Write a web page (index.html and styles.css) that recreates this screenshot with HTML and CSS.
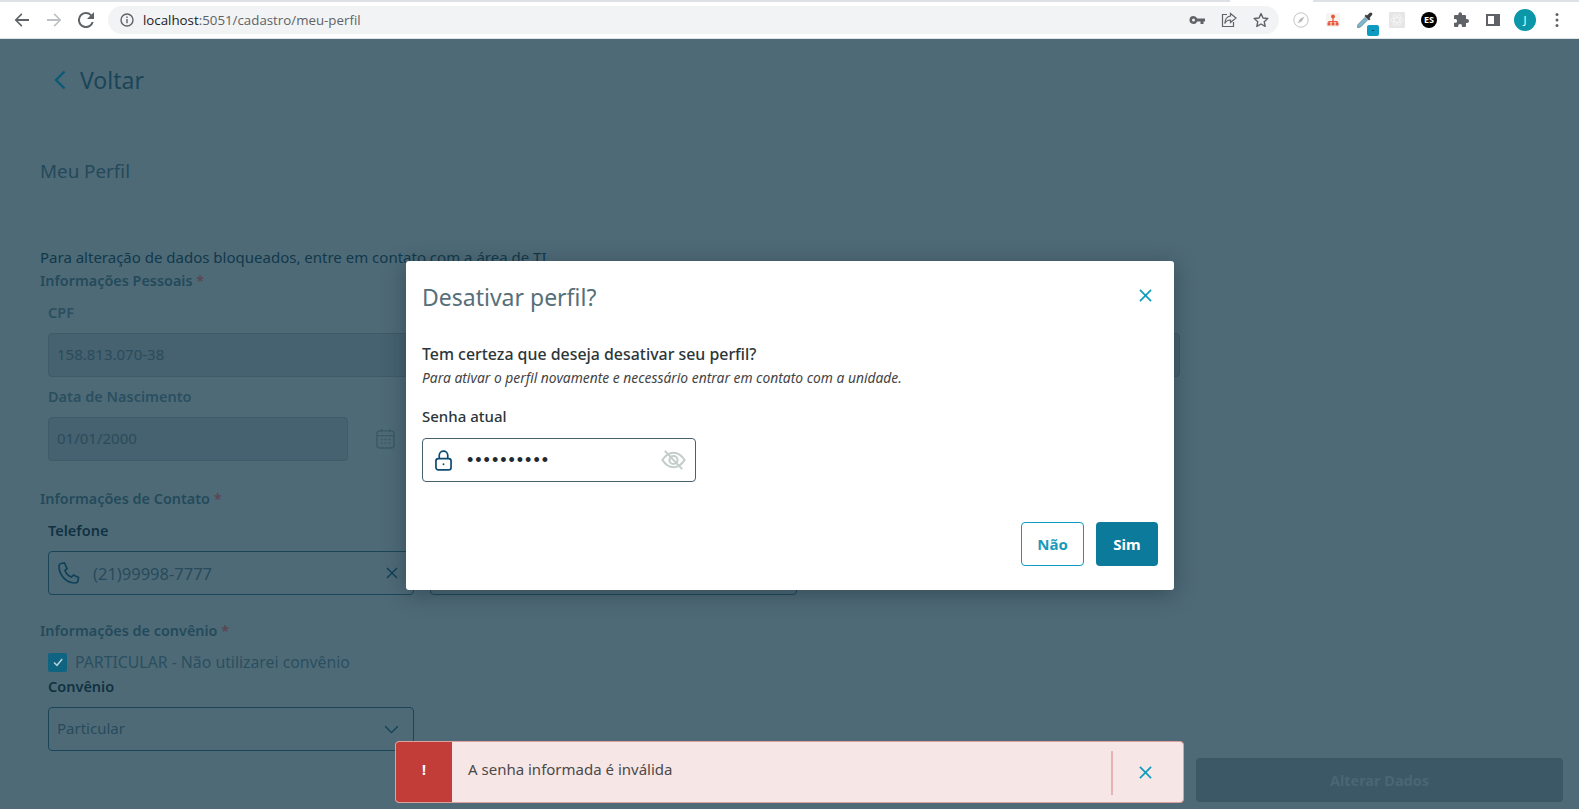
FILE: index.html
```html
<!DOCTYPE html>
<html lang="pt-BR">
<head>
<meta charset="UTF-8" />
<meta name="viewport" content="width=device-width, initial-scale=1" />
<title>Meu Perfil</title>
<link rel="stylesheet" href="styles.css">
</head>
<body>

<div class="abas"><span class="aba"></span></div>

<header class="barra">
  <button class="btn-nav">
    <svg viewBox="0 0 16 16" width="16" height="16"><path d="M15 7H3.800l4.600-4.600L7.300 1.300.6 8l6.700 6.700 1.100-1.100L3.800 9H15z" fill="#5f6368"/></svg>
  </button>
  <button class="btn-nav">
    <svg viewBox="0 0 16 16" width="16" height="16"><path d="M1 7h11.200L7.600 2.400l1.100-1.100L15.400 8l-6.700 6.700-1.100-1.100L12.200 9H1z" fill="#bdc1c6"/></svg>
  </button>
  <button class="btn-nav">
    <svg viewBox="0 0 16 16" width="16" height="16"><path d="M13.600 2.400A7.900 7.900 0 0 0 8 0a8 8 0 1 0 7.700 10h-2.100A6 6 0 1 1 8 2c1.700 0 3.100.7 4.200 1.800L9 7h7V0z" fill="#5f6368"/></svg>
  </button>

  <div class="omnibox">
    <svg class="omni-info" viewBox="0 0 14 14" width="14" height="14"><circle cx="7" cy="7" r="6" fill="none" stroke="#5f6368" stroke-width="1.400"/><path d="M6.300 6h1.400v4.200H6.300zM6.300 3.500h1.400v1.400H6.300z" fill="#5f6368"/></svg>
    <span class="url"><b>localhost</b>:5051/cadastro/meu-perfil</span>
    <div class="omni-acoes">
      <svg viewBox="0 0 16 16" width="16" height="16"><path d="M4.500 4a4 4 0 0 1 3.700 2.500H16v3h-1.500V12h-3V9.500H8.200A4 4 0 1 1 4.500 4zm0 2.500a1.500 1.500 0 1 0 0 3 1.500 1.500 0 0 0 0-3z" fill="#5f6368"/></svg>
      <svg viewBox="0 0 16 16" width="16" height="16" fill="none" stroke="#5f6368" stroke-width="1.200"><path d="M6 2.500H1.500v12h11V10"/><path d="M9.500 1.500 15 6l-5.500 4.500V8C7 8 5 9 3.800 11.500 4 7.500 6 4.500 9.500 4z"/></svg>
      <svg viewBox="0 0 16 16" width="16" height="16"><path d="M8 1.600 10 6l4.800.5-3.600 3.200 1 4.700L8 12l-4.200 2.400 1-4.700L1.200 6.500 6 6z" fill="none" stroke="#5f6368" stroke-width="1.400" stroke-linejoin="round"/></svg>
    </div>
  </div>

  <div class="extensoes">
    <button class="btn-ext">
      <svg viewBox="0 0 16 16" width="16" height="16"><circle cx="8" cy="8" r="7.200" fill="#fff" stroke="#c4c4c4" stroke-width="1"/><path d="M11.500 4.500 9 9 4.500 11.500 7 7z" fill="#b5b5b5"/></svg>
    </button>
    <button class="btn-ext">
      <svg viewBox="0 0 16 16" width="16" height="16"><rect x="1" y="1" width="14" height="14" rx="2" fill="#f7f3f1"/><circle cx="8" cy="4.500" r="2" fill="#e8573a"/><path d="M8 6v3M4 12V9.500h8V12M8 9.500V12" stroke="#e8573a" fill="none" stroke-width="1.200"/><rect x="2.500" y="10.500" width="3" height="3" fill="#e8573a"/><rect x="6.500" y="10.500" width="3" height="3" fill="#e8573a"/><rect x="10.500" y="10.500" width="3" height="3" fill="#e8573a"/></svg>
    </button>
    <button class="btn-ext">
      <svg viewBox="0 0 18 18" width="18" height="18"><path d="M1.500 16.500 2 13.500 9 6.500 11.500 9 4.500 16z" fill="#7fb6d0" stroke="#55808f" stroke-width=".8"/><path d="M8.500 5 10 3.500l1 1L13.500 2c1-.7 2-.7 2.500 0s.5 1.500-.2 2.300L13.500 7l1 1L13 9.500z" fill="#3c4043"/></svg>
      <span class="ext-badge">-</span>
    </button>
    <button class="btn-ext">
      <svg viewBox="0 0 16 16" width="16" height="16"><rect width="16" height="16" fill="#e6e6e6"/><g fill="none" stroke="#f5f5f5" stroke-width=".8"><ellipse cx="8" cy="8" rx="6" ry="2.500"/><ellipse cx="8" cy="8" rx="6" ry="2.500" transform="rotate(60 8 8)"/><ellipse cx="8" cy="8" rx="6" ry="2.500" transform="rotate(120 8 8)"/></g></svg>
    </button>
    <button class="btn-ext"><span class="ext-es">ES</span></button>
    <button class="btn-ext">
      <svg viewBox="0 0 16 16" width="16" height="16"><path d="M14 7h-1V4a1 1 0 0 0-1-1H9V2a1.800 1.800 0 0 0-3.600 0v1H2a1 1 0 0 0-1 1v3h1.200a1.900 1.900 0 0 1 0 3.800H1V14a1 1 0 0 0 1 1h3.200v-1.100a1.900 1.900 0 0 1 3.800 0V15h3a1 1 0 0 0 1-1v-3h1a2 2 0 0 0 0-4z" fill="#5f6368"/></svg>
    </button>
    <button class="btn-ext">
      <svg viewBox="0 0 16 16" width="16" height="16"><path d="M1 2h14v12H1zm2 2v8h6V4z" fill="#5f6368" fill-rule="evenodd"/></svg>
    </button>
    <button class="btn-ext"><span class="avatar">J</span></button>
    <button class="btn-ext">
      <svg viewBox="0 0 4 16" width="4" height="16"><circle cx="2" cy="2.500" r="1.500" fill="#5f6368"/><circle cx="2" cy="8" r="1.500" fill="#5f6368"/><circle cx="2" cy="13.500" r="1.500" fill="#5f6368"/></svg>
    </button>
  </div>
</header>

<main class="pagina">
  <a class="voltar">
    <svg viewBox="0 0 12 20" width="12" height="20"><path d="M10.500 1.500 2 10l8.500 8.500" fill="none" stroke="#0b5a76" stroke-width="2.400"/></svg>
    <span>Voltar</span>
  </a>

  <h1 class="titulo">Meu Perfil</h1>

  <p class="aviso">Para alteração de dados bloqueados, entre em contato com a área de TI</p>
  <h2 class="secao">Informações Pessoais <em>*</em></h2>

  <div class="campos">
    <label class="rotulo">CPF</label>
    <div class="input bloqueado cheio">158.813.070-38</div>

    <label class="rotulo">Data de Nascimento</label>
    <div class="linha-data">
      <div class="input bloqueado data">01/01/2000</div>
      <svg viewBox="0 0 20 22" width="19" height="21" fill="none" stroke="#3a5a68" stroke-width="1.500"><rect x="1" y="3" width="18" height="18" rx="3"/><path d="M1 8h18M5.500 1v3M14.500 1v3"/><path d="M5 12h2M9 12h2M13 12h2M5 16h2M9 16h2M13 16h2" stroke-width="1.600"/></svg>
    </div>
  </div>

  <h2 class="secao contato">Informações de Contato <em>*</em></h2>
  <div class="campos">
    <label class="rotulo forte">Telefone</label>
    <div class="linha-dupla">
      <div class="input ativo">
        <svg viewBox="0 0 24 24" width="24" height="24" fill="none" stroke="#0f4257" stroke-width="1.700"><path d="M4 2.500 7.500 2 10 7.500 8 9.500c1 3 3.500 5.500 6.500 6.500l2-2 5 2.500-.5 3.500c-.3 1.200-1.200 2-2.500 2C9.500 22 2 14.500 2 5c0-1.200.8-2.200 2-2.500z"/></svg>
        <span class="valor">(21)99998-7777</span>
        <svg class="limpar" viewBox="0 0 12 12" width="12" height="12"><path d="M1 1l10 10M11 1 1 11" stroke="#0f4257" stroke-width="1.500"/></svg>
      </div>
      <div class="input ativo email"></div>
    </div>
  </div>

  <h2 class="secao convenio">Informações de convênio <em>*</em></h2>
  <div class="campos">
    <div class="check-linha">
      <span class="check"><svg viewBox="0 0 12 12" width="12" height="12"><path d="M2 6.500 5 9.300 10.200 3" fill="none" stroke="#b9d0d9" stroke-width="1.500"/></svg></span>
      <span>PARTICULAR - Não utilizarei convênio</span>
    </div>
    <label class="rotulo forte convenio-rotulo">Convênio</label>
    <div class="input ativo select">
      <span>Particular</span>
      <svg viewBox="0 0 16 10" width="15" height="9"><path d="M1 1.500 8 8.500l7-7" fill="none" stroke="#0f4257" stroke-width="1.500"/></svg>
    </div>
  </div>

  <div class="acoes">
    <button class="btn-alterar">Alterar Dados</button>
  </div>

  <div class="overlay">
    <section class="modal">
      <div class="modal-topo">
        <h3>Desativar perfil?</h3>
        <svg viewBox="0 0 14 14" width="13" height="13"><path d="M1 1l12 12M13 1 1 13" stroke="#0e9bbd" stroke-width="1.800"/></svg>
      </div>
      <p class="modal-pergunta">Tem certeza que deseja desativar seu perfil?</p>
      <p class="modal-nota">Para ativar o perfil novamente e necessário entrar em contato com a unidade.</p>
      <label class="modal-rotulo">Senha atual</label>
      <div class="senha">
        <svg viewBox="0 0 18 22" width="17" height="21" fill="none" stroke="#0f4a73" stroke-width="1.800"><rect x="1" y="9" width="16" height="12" rx="2.500"/><path d="M4.500 9V5.500a4.500 4.500 0 0 1 9 0V9"/><circle cx="9" cy="15" r="1" fill="#0f4a73" stroke="none"/></svg>
        <span class="pontos">••••••••••</span>
        <svg class="olho" viewBox="0 0 26 22" width="25" height="22" fill="none" stroke="#c3cecb" stroke-width="2.200"><path d="M1.500 11C5 5.500 9 3.500 13 3.500S21 5.500 24.500 11C21 16.500 17 18.500 13 18.500S5 16.500 1.500 11z"/><circle cx="13" cy="11" r="4.200"/><path d="M4 1.500 22 20.500"/></svg>
      </div>
      <div class="modal-botoes">
        <button class="btn-nao">Não</button>
        <button class="btn-sim">Sim</button>
      </div>
    </section>

    <div class="toast">
      <div class="toast-icone">!</div>
      <span class="toast-texto">A senha informada é inválida</span>
      <div class="toast-fechar">
        <svg viewBox="0 0 14 14" width="13" height="13"><path d="M1 1l12 12M13 1 1 13" stroke="#0e9bbd" stroke-width="1.800"/></svg>
      </div>
    </div>
  </div>
</main>

</body>
</html>
```

FILE: styles.css
```css
* {
  box-sizing: border-box;
  margin: 0;
  padding: 0;
}

body {
  font-family: 'Noto Sans', 'Open Sans', sans-serif;
  background: #4f6a77;
  height: 809px;
  overflow: hidden;
  display: flex;
  flex-direction: column;
}

button {
  border: none;
  background: none;
  font-family: inherit;
}

/* barra do navegador */
.abas {
  height: 2px;
  background: #dee1e6;
  display: flex;
  justify-content: flex-end;
}

.aba {
  width: 83px;
  height: 2px;
  background: #fff;
  margin-right: 266px;
}

.barra {
  height: 37px;
  background: #fff;
  border-bottom: 1px solid #dfe1e5;
  display: flex;
  align-items: center;
  padding-left: 6px;
}

.btn-nav {
  width: 32px;
  height: 32px;
  display: flex;
  align-items: center;
  justify-content: center;
}

.omnibox {
  width: 1171px;
  height: 28px;
  margin-left: 6px;
  background: #f1f3f4;
  border-radius: 14px;
  display: flex;
  align-items: center;
  padding: 0 10px 0 12px;
}

.url {
  font-family: 'Open Sans', sans-serif;
  font-size: 13.300px;
  color: #5f6368;
  margin-left: 9px;
}

.url b {
  font-weight: 400;
  color: #202124;
}

.omni-acoes {
  margin-left: auto;
  display: flex;
  gap: 16px;
}

.extensoes {
  display: flex;
  align-items: center;
  margin-left: 6px;
}

.btn-ext {
  width: 32px;
  height: 32px;
  display: flex;
  align-items: center;
  justify-content: center;
  position: relative;
}

.ext-badge {
  position: absolute;
  right: 2px;
  bottom: 0;
  width: 12px;
  height: 11px;
  border-radius: 2px;
  background: #0e9bc2;
  color: #123;
  font-size: 8px;
  line-height: 10px;
  text-align: center;
}

.ext-es {
  width: 16px;
  height: 16px;
  border-radius: 50%;
  background: #000;
  color: #fff;
  font-size: 9px;
  font-weight: 700;
  line-height: 16px;
  text-align: center;
}

.avatar {
  width: 22px;
  height: 22px;
  border-radius: 50%;
  background: #0b97a8;
  color: #fff;
  font-family: 'Open Sans', sans-serif;
  font-size: 11px;
  line-height: 22px;
  text-align: center;
}

/* pagina atras do modal */
.pagina {
  flex: 1;
  padding: 0 16px 0 40px;
  color: #123f52;
}

.voltar {
  display: flex;
  align-items: center;
  gap: 14px;
  padding: 24px 0 0 14px;
  font-size: 23px;
  line-height: 34px;
  color: #1b4557;
}

.titulo {
  font-size: 18.800px;
  font-weight: 400;
  line-height: 26px;
  margin-top: 61px;
  color: #24495a;
}

.aviso {
  font-size: 15px;
  line-height: 20px;
  margin-top: 63px;
  color: #10394b;
}

.secao {
  font-size: 14.400px;
  font-weight: 600;
  line-height: 20px;
  margin-top: 4px;
  color: #234a5b;
}

.secao em {
  color: #5c4452;
  font-style: normal;
}

.secao.contato {
  margin-top: 30px;
}

.secao.convenio {
  margin-top: 28px;
}

.campos {
  padding-left: 8px;
  display: flex;
  flex-direction: column;
}

.rotulo {
  font-size: 14.500px;
  font-weight: 600;
  line-height: 20px;
  margin-top: 11px;
  margin-bottom: 11px;
  color: #2a4f60;
}

.rotulo.forte {
  color: #0f3243;
}

.input {
  height: 44px;
  border-radius: 4px;
  display: flex;
  align-items: center;
  padding: 0 8px;
  font-size: 15px;
}

.input.bloqueado {
  background: #46616f;
  border: 1px solid #3f5a68;
  color: #2a4c5c;
  margin-bottom: -2px;
  padding-bottom: 2px;
}

.input.cheio {
  width: 1132px;
}

.input.ativo {
  border: 1px solid #1a4559;
  color: #274b5c;
  width: 366px;
}

.input.email {
  width: 367px;
}

.linha-data {
  display: flex;
  align-items: center;
  gap: 28px;
}

.input.data {
  width: 300px;
}

.linha-dupla {
  display: flex;
  gap: 16px;
  margin-bottom: -2px;
}

.valor {
  margin-left: 12px;
  font-size: 16.500px;
}

.limpar {
  margin-left: auto;
  margin-right: 7px;
}

.check-linha {
  display: flex;
  align-items: center;
  gap: 8px;
  font-size: 15.800px;
  line-height: 20px;
  margin-top: 11px;
  color: #2a4f60;
}

.check {
  width: 19px;
  height: 19px;
  border-radius: 2px;
  background: #0f6482;
  display: flex;
  align-items: center;
  justify-content: center;
}

.convenio-rotulo {
  margin-top: 4px;
}

.select {
  justify-content: space-between;
}

.select span {
  margin-bottom: 2px;
}

.select svg {
  margin-right: 6px;
}

.acoes {
  display: flex;
  justify-content: flex-end;
  margin-top: 7px;
}

.btn-alterar {
  width: 367px;
  height: 44px;
  border-radius: 4px;
  background: #3c5866;
  color: #4a6674;
  font-size: 14.500px;
  font-weight: 700;
}

/* modal e toast */
.overlay {
  position: absolute;
  top: 0;
  left: 0;
  width: 100%;
  height: 100%;
}

.modal {
  position: absolute;
  left: 406px;
  top: 261px;
  width: 768px;
  height: 329px;
  background: #fff;
  border-radius: 3px;
  box-shadow: 0 4px 22px rgba(20, 40, 50, .45);
  padding: 0 16px;
  display: flex;
  flex-direction: column;
}

.modal-topo {
  display: flex;
  align-items: center;
  justify-content: space-between;
  height: 72px;
  padding-right: 6px;
}

.modal-topo svg {
  margin-top: -4px;
}

.modal-topo h3 {
  font-size: 23px;
  font-weight: 400;
  color: #566f79;
}

.modal-pergunta {
  font-size: 15.900px;
  font-weight: 500;
  line-height: 20px;
  margin-top: 11px;
  color: #2c3639;
}

.modal-nota {
  font-size: 13.850px;
  font-style: italic;
  line-height: 16px;
  margin-top: 6px;
  color: #444;
}

.modal-rotulo {
  font-size: 15px;
  line-height: 20px;
  margin-top: 20px;
  font-weight: 500;
  color: #2c3639;
}

.senha {
  width: 274px;
  height: 44px;
  margin-top: 12px;
  border: 1px solid #476170;
  border-radius: 4px;
  display: flex;
  align-items: center;
  padding: 0 9px 0 12px;
}

.pontos {
  margin-left: 15px;
  font-family: 'Liberation Sans', sans-serif;
  font-size: 18px;
  letter-spacing: 2px;
  color: #1f2a30;
}

.olho {
  margin-left: auto;
}

.modal-botoes {
  display: flex;
  justify-content: flex-end;
  gap: 12px;
  margin-top: 40px;
}

.btn-nao,
.btn-sim {
  width: 63px;
  height: 44px;
  border-radius: 4px;
  font-size: 15px;
  font-weight: 700;
}

.btn-nao {
  border: 1px solid #0e9bbd;
  color: #1a9abb;
}

.btn-sim {
  width: 62px;
  background: #0b7a9b;
  color: #fff;
}

.toast {
  position: absolute;
  left: 395px;
  top: 741px;
  width: 789px;
  height: 62px;
  background: #f7e6e6;
  border: 1px solid #e0a0a0;
  border-radius: 4px;
  display: flex;
  align-items: center;
}

.toast-icone {
  width: 56px;
  height: 60px;
  background: #c23d38;
  border-radius: 3px 0 0 3px;
  color: #fff;
  font-size: 14px;
  font-weight: 700;
  line-height: 56px;
  text-align: center;
}

.toast-texto {
  font-size: 15px;
  color: #4a4a4a;
  margin-left: 16px;
  margin-top: -6px;
}

.toast-fechar {
  margin-left: auto;
  width: 72px;
  height: 44px;
  border-left: 2px solid #e8b2b2;
  display: flex;
  align-items: center;
  justify-content: center;
  margin-top: 1px;
  padding-right: 6px;
}
```
